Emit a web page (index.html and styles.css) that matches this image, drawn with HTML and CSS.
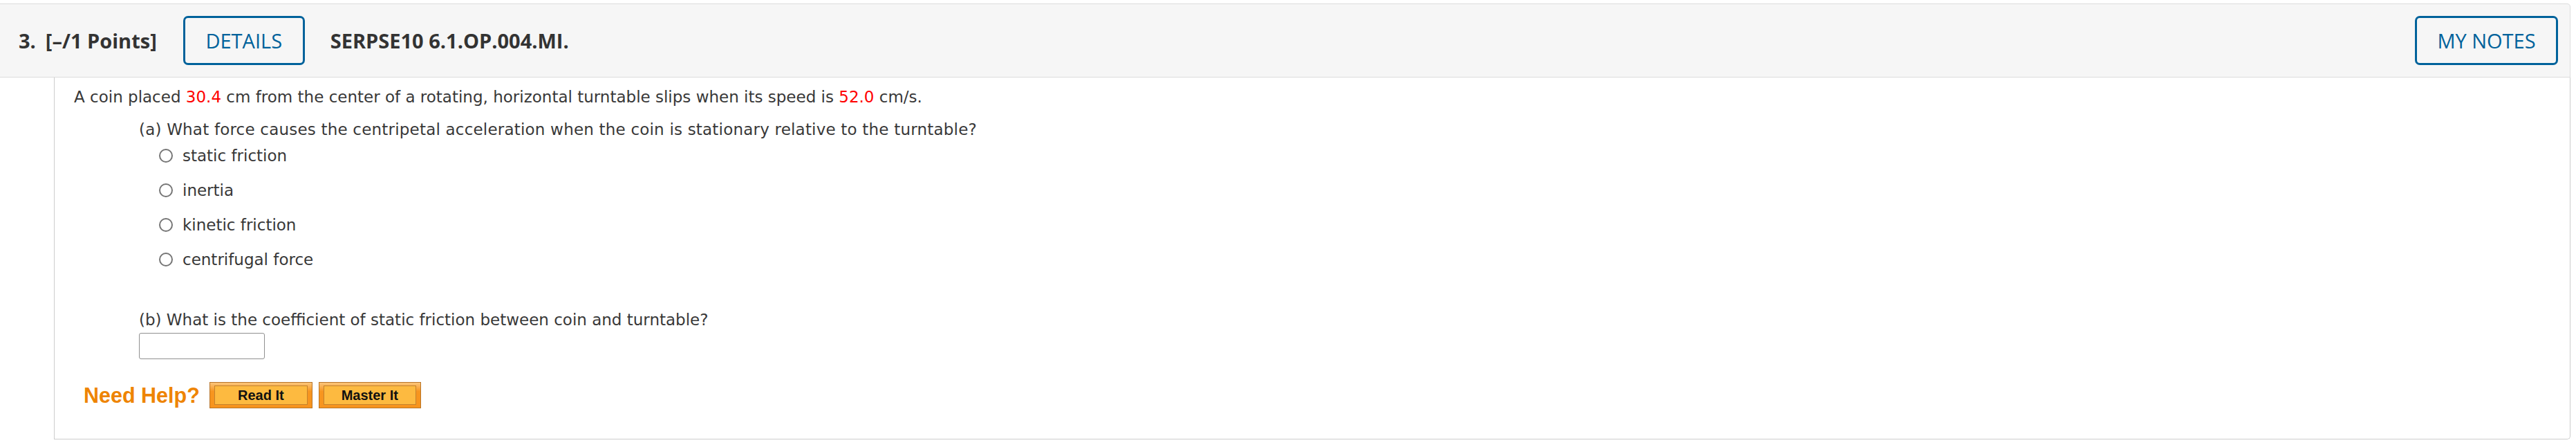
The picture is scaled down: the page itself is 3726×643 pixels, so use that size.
FILE: index.html
```html
<!DOCTYPE html>
<html lang="en">
<head>
<meta charset="utf-8">
<title>Question 3</title>
<link rel="stylesheet" href="styles.css">
</head>
<body>
<div class="question">
  <div class="q-header">
    <span class="q-num">3.</span>
    <span class="q-points">[–/1 Points]</span>
    <button class="outline-btn details-btn" type="button">DETAILS</button>
    <span class="q-code">SERPSE10 6.1.OP.004.MI.</span>
    <span class="spacer"></span>
    <button class="outline-btn notes-btn" type="button">MY NOTES</button>
  </div>
  <div class="q-body">
    <p class="stem">A coin placed <span class="num">30.4</span> cm from the center of a rotating, horizontal turntable slips when its speed is <span class="num">52.0</span> cm/s.</p>
    <div class="part part-a">
      <p class="part-q">(a) What force causes the centripetal acceleration when the coin is stationary relative to the turntable?</p>
      <ul class="choices">
        <li class="choice"><span class="radio"></span><span class="choice-label">static friction</span></li>
        <li class="choice"><span class="radio"></span><span class="choice-label">inertia</span></li>
        <li class="choice"><span class="radio"></span><span class="choice-label">kinetic friction</span></li>
        <li class="choice"><span class="radio"></span><span class="choice-label">centrifugal force</span></li>
      </ul>
    </div>
    <div class="part part-b">
      <p class="part-q">(b) What is the coefficient of static friction between coin and turntable?</p>
      <div class="answer-box"></div>
    </div>
    <div class="help-row">
      <span class="need-help">Need Help?</span>
      <span class="help-btn read-btn"><span class="help-btn-inner">Read It</span></span>
      <span class="help-btn master-btn"><span class="help-btn-inner">Master It</span></span>
    </div>
  </div>
</div>
</body>
</html>
```

FILE: styles.css
```css
html, body {
  margin: 0;
  padding: 0;
  background: #ffffff;
}

.question {
  width: 3718px;
  padding-top: 5px;
}

.q-header {
  display: flex;
  align-items: center;
  height: 105px;
  background: #f6f6f6;
  border: 1px solid #dcdcdc;
  border-left: none;
  border-radius: 0 5px 0 0;
  padding-left: 27px;
  padding-right: 17px;
  font-family: "Open Sans", "Liberation Sans", sans-serif;
  color: #333333;
}

.q-num {
  font-size: 29px;
  font-weight: 700;
}

.q-points {
  font-size: 29px;
  font-weight: 700;
  margin-left: 14px;
}

.q-code {
  font-size: 29px;
  font-weight: 700;
  margin-left: 37px;
}

.spacer {
  flex: 1;
}

.outline-btn {
  box-sizing: border-box;
  height: 71px;
  border: 3px solid #00629b;
  border-radius: 7px;
  background: transparent;
  color: #00629b;
  font-family: "Open Sans", "Liberation Sans", sans-serif;
  font-size: 29px;
  font-weight: 400;
  padding: 0;
  text-align: center;
}

.details-btn {
  width: 176px;
  margin-left: 38px;
}

.notes-btn {
  width: 207px;
}

.q-body {
  margin-left: 78px;
  height: 523px;
  box-sizing: border-box;
  border: 1px solid #cccccc;
  border-top: none;
  border-radius: 0 0 5px 0;
  padding-left: 28px;
  padding-top: 13px;
  font-family: "DejaVu Sans", Verdana, sans-serif;
  font-size: 23px;
  color: #383838;
}

.stem {
  margin: 0;
  line-height: 30px;
}

.num {
  color: #ff0000;
}

.part {
  margin-left: 94px;
}

.part-a {
  margin-top: 19px;
}

.part-q {
  margin: 0;
  line-height: 26px;
}

.part-a .part-q {
  letter-spacing: 0.2px;
}

.choices {
  list-style: none;
  margin: 0;
  padding: 0;
}

.choice {
  display: flex;
  align-items: center;
  height: 50px;
}

.radio {
  box-sizing: border-box;
  width: 20px;
  height: 20px;
  border: 2px solid #767676;
  border-radius: 50%;
  margin-left: 29px;
  margin-right: 14px;
  background: #ffffff;
}

.part-b {
  margin-top: 49px;
}

.answer-box {
  box-sizing: border-box;
  width: 182px;
  height: 38px;
  margin-top: 6px;
  border: 1px solid #8f8f8f;
  border-radius: 3px;
  background: #ffffff;
}

.help-row {
  display: flex;
  align-items: center;
  margin-top: 33px;
  margin-left: 14px;
}

.need-help {
  font-family: "Liberation Sans", Arial, sans-serif;
  font-weight: 700;
  font-size: 30.5px;
  color: #ee8400;
  margin-right: 14px;
}

.help-btn {
  box-sizing: border-box;
  display: flex;
  height: 38px;
  padding: 4px 6px;
  border: 1px solid #b87428;
  background: linear-gradient(#fbc57a, #f7951f 35%, #f7941d);
}

.read-btn {
  width: 149px;
  margin-right: 9px;
}

.master-btn {
  width: 148px;
}

.help-btn-inner {
  flex: 1;
  display: flex;
  align-items: center;
  justify-content: center;
  border: 1px solid #c4822c;
  background: #fdba40;
  font-family: "Liberation Sans", Arial, sans-serif;
  font-weight: 700;
  font-size: 20px;
  color: #111111;
}
```
